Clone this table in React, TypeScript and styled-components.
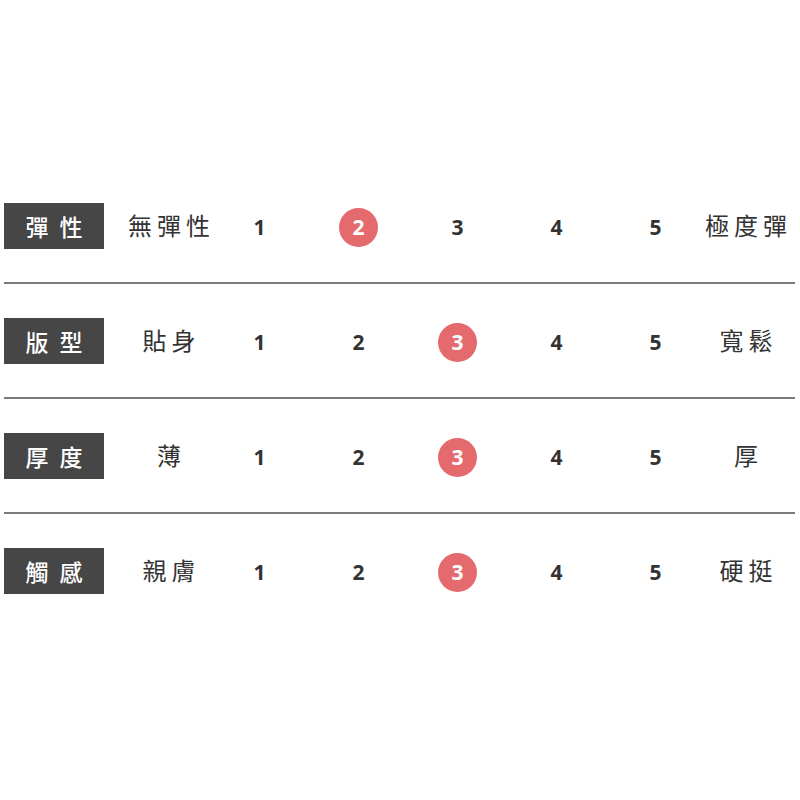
import styled, { createGlobalStyle } from 'styled-components';

const GlobalStyle = createGlobalStyle`
  html, body {
    margin: 0;
    padding: 0;
    background: #ffffff;
  }
  body {
    font-family: "Noto Sans", "Noto Sans CJK TC", sans-serif;
  }
`;

const Table = styled.div`
  width: 791px;
  margin-left: 4px;
  padding-top: 169px;
`;

const Row = styled.div<{ last?: boolean }>`
  display: grid;
  grid-template-columns: 100px 106px repeat(5, 99px) 82px;
  align-items: center;
  padding: 34px 0 33px;
  border-bottom: ${({ last }) => (last ? '2px solid transparent' : '2px solid #7a7a7a')};
`;

const Label = styled.div`
  height: 46px;
  background-color: #464646;
  color: #ffffff;
  display: flex;
  align-items: center;
  justify-content: center;
  font-family: "Noto Sans CJK TC", sans-serif;
  font-weight: 500;
  font-size: 23px;
  letter-spacing: 11px;
  padding-left: 11px;
  box-sizing: border-box;
`;

const Side = styled.div<{ first?: boolean }>`
  display: flex;
  justify-content: center;
  color: #333333;
  font-family: "Noto Sans CJK TC", sans-serif;
  font-size: 24px;
  letter-spacing: 5px;
  white-space: nowrap;
  padding-left: ${({ first }) => (first ? '29px' : '5px')};
  margin-top: -3px;
`;

const Score = styled.div`
  display: flex;
  justify-content: center;
  align-items: center;
  padding-top: 2px;
`;

const Num = styled.span<{ active?: boolean }>`
  display: flex;
  align-items: center;
  justify-content: center;
  width: 39px;
  height: 39px;
  border-radius: 50%;
  background-color: ${({ active }) => (active ? '#e46a6e' : 'transparent')};
  color: ${({ active }) => (active ? '#ffffff' : '#333333')};
  font-family: "Open Sans", sans-serif;
  font-weight: 700;
  font-size: 21px;
`;

const rows = [
  { label: '彈性', left: '無彈性', right: '極度彈', value: 2 },
  { label: '版型', left: '貼身', right: '寬鬆', value: 3 },
  { label: '厚度', left: '薄', right: '厚', value: 3 },
  { label: '觸感', left: '親膚', right: '硬挺', value: 3 },
];

export default function App() {
  return (
    <>
      <GlobalStyle />
      <Table>
        {rows.map((r, i) => (
          <Row key={r.label} last={i === rows.length - 1}>
            <Label>{r.label}</Label>
            <Side first>{r.left}</Side>
            {[1, 2, 3, 4, 5].map((n) => (
              <Score key={n}>
                <Num active={n === r.value}>{n}</Num>
              </Score>
            ))}
            <Side>{r.right}</Side>
          </Row>
        ))}
      </Table>
    </>
  );
}
